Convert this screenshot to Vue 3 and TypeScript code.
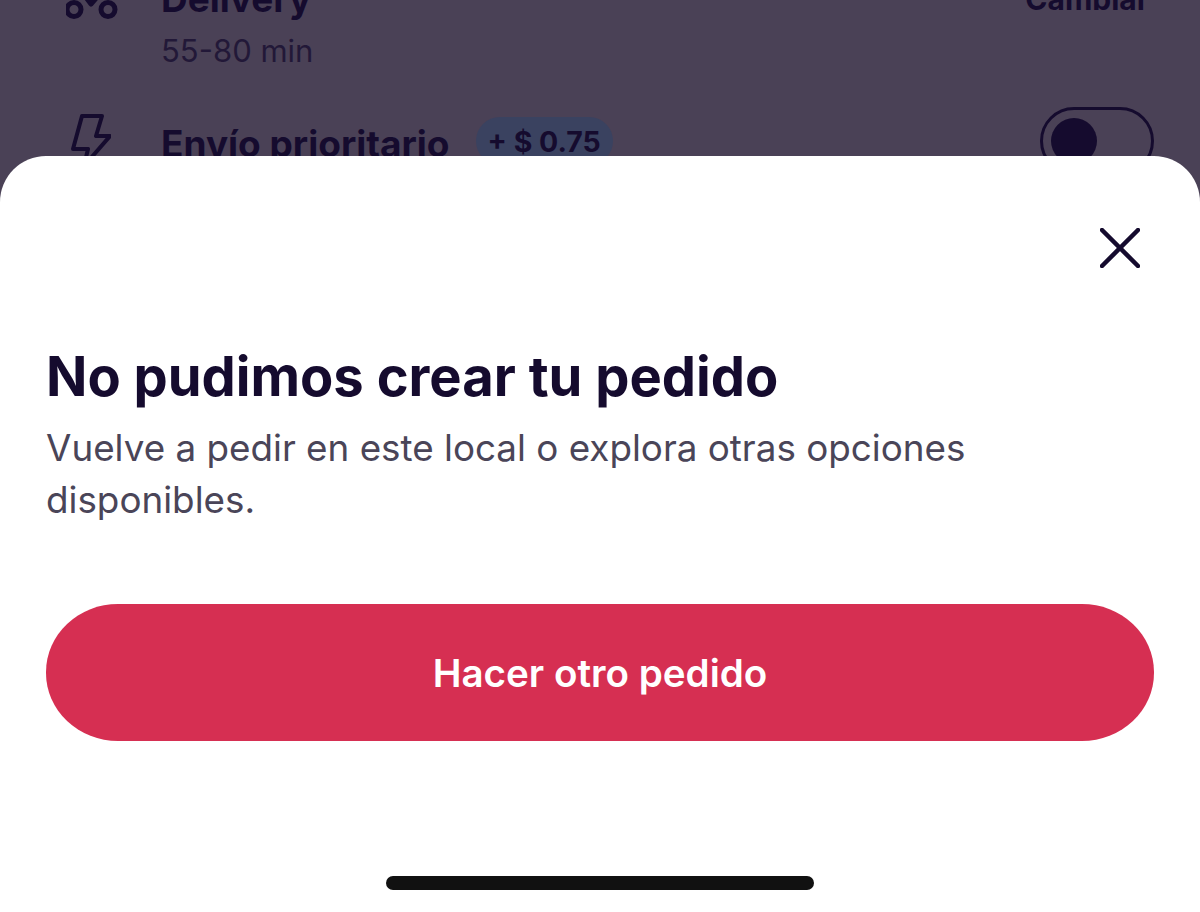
<template>
  <div class="screen">
    <div class="backdrop">
      <div class="row delivery-row">
        <div class="icon-cell">
          <svg class="bike" viewBox="0 0 54 36" fill="none">
            <circle cx="8" cy="23.5" r="7" />
            <circle cx="42" cy="23.5" r="7" />
            <path d="M19 10l6 8 7-8" />
          </svg>
        </div>
        <div class="row-text">
          <div class="row-title">Delivery</div>
          <div class="row-sub">55-80 min</div>
        </div>
        <span class="change">Cambiar</span>
      </div>
      <div class="row priority-row">
        <div class="icon-cell">
          <svg class="bolt" viewBox="0 0 40 56" fill="none">
            <path d="M11 2h20l-6 20h14L13 52l4-17H2z" />
          </svg>
        </div>
        <div class="row-title">Envío prioritario</div>
        <span class="price">+ $ 0.75</span>
        <div class="toggle"><span class="knob"></span></div>
      </div>
    </div>

    <div class="sheet">
      <div class="sheet-top">
        <button class="close" aria-label="Cerrar">
          <svg viewBox="0 0 40 40" fill="none">
            <path d="M2 2l36 36M38 2L2 38" />
          </svg>
        </button>
      </div>
      <h1 class="title">{{ title }}</h1>
      <p class="message">{{ message }}</p>
      <button class="action">{{ actionText }}</button>
      <div class="home-bar"></div>
    </div>
  </div>
</template>

<script setup lang="ts">
const title = 'No pudimos crear tu pedido'
const message = 'Vuelve a pedir en este local o explora otras opciones disponibles.'
const actionText = 'Hacer otro pedido'
</script>

<style>
html,
body {
  margin: 0;
  background: #4a4156;
}
</style>

<style scoped>
.screen {
  width: 1200px;
  height: 912px;
  display: flex;
  flex-direction: column;
  overflow: hidden;
  background: #4a4156;
  font-family: Inter, "Liberation Sans", sans-serif;
  color: #150b2e;
}

.backdrop {
  height: 156px;
  flex: none;
  display: flex;
  flex-direction: column;
  justify-content: flex-end;
  padding: 0 46px;
  box-sizing: border-box;
}

.row {
  display: flex;
  flex: none;
}

.delivery-row {
  align-items: flex-start;
  margin-bottom: 37px;
}

.priority-row {
  height: 68px;
  margin-bottom: -19px;
  align-items: center;
}

.icon-cell {
  width: 115px;
  flex: none;
  display: flex;
}

.icon-cell svg {
  stroke: #150b2e;
  stroke-linejoin: round;
  stroke-linecap: round;
}

.bike {
  width: 54px;
  height: 36px;
  margin: 9px 0 0 20px;
  stroke-width: 5;
}

.bolt {
  width: 40px;
  height: 56px;
  margin: 1px 0 0 25px;
  stroke-width: 4;
}

.row-text {
  flex: 1;
}

.row-title {
  font-size: 37px;
  line-height: 44px;
  font-weight: 700;
  white-space: nowrap;
}

.priority-row .row-title {
  margin-top: 6px;
}

.row-sub {
  margin-top: 11px;
  font-size: 31px;
  line-height: 38px;
  opacity: 0.75;
}

.change {
  margin-right: 5px;
  font-size: 30px;
  line-height: 44px;
  font-weight: 700;
}

.price {
  margin-left: 26px;
  padding: 0 12px;
  height: 48px;
  line-height: 50px;
  border-radius: 24px;
  background: #3a4260;
  font-size: 28.5px;
  font-weight: 700;
  white-space: nowrap;
}

.toggle {
  margin-left: auto;
  width: 114px;
  height: 68px;
  box-sizing: border-box;
  border: 3px solid #150b2e;
  border-radius: 34px;
  padding: 8px;
}

.knob {
  display: block;
  width: 46px;
  height: 46px;
  border-radius: 50%;
  background: #150b2e;
}

.sheet {
  flex: 1;
  position: relative;
  background: #fff;
  border-radius: 46px 46px 0 0;
  padding: 0 46px;
  display: flex;
  flex-direction: column;
}

.sheet-top {
  display: flex;
  justify-content: flex-end;
  padding-top: 72px;
}

.close {
  width: 40px;
  height: 40px;
  padding: 0;
  margin-right: 14px;
  border: none;
  background: none;
}

.close svg {
  display: block;
  width: 40px;
  height: 40px;
  stroke: #150b2e;
  stroke-width: 4.5;
  stroke-linecap: round;
}

.title {
  margin: 76px 0 0;
  font-size: 54.3px;
  line-height: 64px;
  font-weight: 700;
  white-space: nowrap;
}

.message {
  margin: 14px 0 0;
  width: 960px;
  font-size: 36.8px;
  line-height: 52px;
  color: #4a4558;
}

.action {
  margin-top: 78px;
  width: 100%;
  height: 137px;
  flex: none;
  border: none;
  border-radius: 72px / 68px;
  background: #d62f52;
  color: #fff;
  font-family: inherit;
  font-size: 38.6px;
  font-weight: 600;
}

.home-bar {
  position: absolute;
  left: 386px;
  bottom: 22px;
  width: 428px;
  height: 14px;
  border-radius: 7px;
  background: #111;
}
</style>
